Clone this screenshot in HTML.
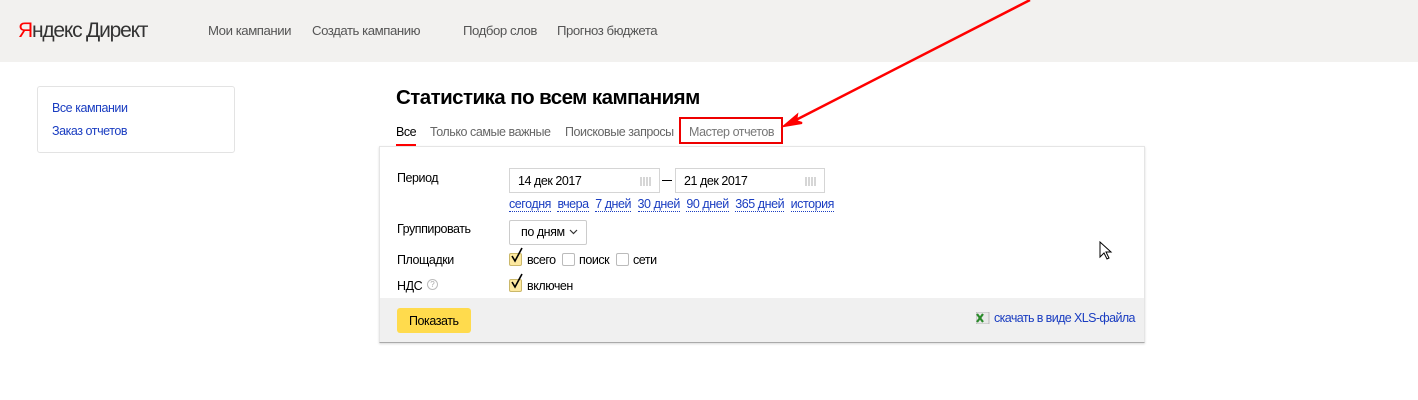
<!DOCTYPE html>
<html><head><meta charset="utf-8"><style>
*{margin:0;padding:0;box-sizing:border-box}
body{width:1418px;height:400px;position:relative;background:#fff;font-family:"Liberation Sans",sans-serif;font-size:13px;color:#000;overflow:hidden}
.a{position:absolute;white-space:nowrap}
.n{font-size:12.5px;letter-spacing:-0.45px}
.lnk{color:#1a3dc1;border-bottom:1px dotted #1a3dc1;line-height:14px;margin-right:6.5px}
.inp{position:absolute;border:1px solid #d5d5d5;height:25px;background:#fff;padding:5px 8px;font-size:12.5px;letter-spacing:-0.45px}
.cal{position:absolute;right:8px;top:8px;width:11px;height:9px;background:repeating-linear-gradient(90deg,#ccc 0 2px,transparent 2px 3px),repeating-linear-gradient(0deg,#fff 0 1px,transparent 1px 3px);opacity:.8}
.cb{position:absolute;width:13px;height:13px;border:1px solid #bbb;border-radius:2px;background:#fff}
.cb.on{background:#fde9a0;border-color:#cbb86a}
</style></head><body>
<div class="a" style="left:0;top:0;width:1418px;height:62px;background:#f2f1ef"></div>
<div class="a" style="left:18px;top:19px;font-size:21px;letter-spacing:-1.2px;color:#333"><span style="color:#f00">Я</span>ндекс Директ</div>
<div class="a n" style="left:208px;top:23px;color:#555;font-size:13.2px">Мои кампании</div>
<div class="a n" style="left:312px;top:23px;color:#555;font-size:13.2px">Создать кампанию</div>
<div class="a n" style="left:463px;top:23px;color:#555;font-size:13.2px">Подбор слов</div>
<div class="a n" style="left:557px;top:23px;color:#555;font-size:13.2px">Прогноз бюджета</div>

<div class="a" style="left:37px;top:86px;width:198px;height:67px;border:1px solid #e3e3e3;border-radius:3px"></div>
<div class="a n" style="left:52px;top:101px;color:#1a3dc1">Все кампании</div>
<div class="a n" style="left:52px;top:124px;color:#1a3dc1">Заказ отчетов</div>

<div class="a" style="left:396px;top:86px;font-size:20.5px;font-weight:bold;letter-spacing:-0.55px">Статистика по всем кампаниям</div>
<div class="a n" style="left:396px;top:125px">Все</div>
<div class="a" style="left:396px;top:144px;width:20px;height:2px;background:#f00"></div>
<div class="a n" style="left:430px;top:125px;color:#666">Только самые важные</div>
<div class="a n" style="left:565px;top:125px;color:#666">Поисковые запросы</div>
<div class="a n" style="left:689px;top:125px;color:#777">Мастер отчетов</div>
<div class="a" style="left:679px;top:117px;width:104px;height:27px;border:2px solid #e00"></div>

<div class="a" style="left:379px;top:146px;width:766px;height:197px;border:1px solid #e5e5e5;border-bottom:1px solid #aaa;box-shadow:0 1px 2px rgba(0,0,0,.15)"></div>
<div class="a" style="left:380px;top:298px;width:764px;height:44px;background:#f0f0f0"></div>

<div class="a n" style="left:397px;top:171px">Период</div>
<div class="inp" style="left:509px;top:168px;width:151px">14 дек 2017<div class="cal"></div></div>
<div class="a" style="left:662px;top:180px;width:10px;height:1px;background:#000"></div>
<div class="inp" style="left:675px;top:168px;width:150px">21 дек 2017<div class="cal"></div></div>
<div class="a n" style="left:509px;top:197px"><span class="lnk">сегодня</span><span class="lnk">вчера</span><span class="lnk">7 дней</span><span class="lnk">30 дней</span><span class="lnk">90 дней</span><span class="lnk">365 дней</span><span class="lnk">история</span></div>

<div class="a n" style="left:397px;top:222px">Группировать</div>
<div class="a" style="left:509px;top:220px;width:78px;height:25px;border:1px solid #ccc;border-radius:2px"></div>
<div class="a n" style="left:521px;top:225px">по дням</div>
<svg class="a" style="left:569px;top:229px" width="9" height="6"><path d="M1 1l3.5 3.5L8 1" stroke="#333" fill="none" stroke-width="1.2"/></svg>

<div class="a n" style="left:397px;top:253px">Площадки</div>
<div class="cb on" style="left:509px;top:253px"></div>
<svg class="a" style="left:510px;top:247px" width="14" height="17"><path d="M2 9l3 5L12 1" stroke="#000" fill="none" stroke-width="1.6"/></svg>
<div class="a n" style="left:527px;top:253px">всего</div>
<div class="cb" style="left:562px;top:253px"></div>
<div class="a n" style="left:579px;top:253px">поиск</div>
<div class="cb" style="left:616px;top:253px"></div>
<div class="a n" style="left:633px;top:253px">сети</div>

<div class="a n" style="left:397px;top:279px">НДС</div>
<div class="a" style="left:427px;top:279px;width:11px;height:11px;border:1px solid #bbb;border-radius:50%;font-size:8px;color:#aaa;text-align:center;line-height:9px">?</div>
<div class="cb on" style="left:509px;top:279px"></div>
<svg class="a" style="left:510px;top:273px" width="14" height="17"><path d="M2 9l3 5L12 1" stroke="#000" fill="none" stroke-width="1.6"/></svg>
<div class="a n" style="left:527px;top:279px">включен</div>

<div class="a" style="left:397px;top:308px;width:74px;height:25px;background:#ffdb4d;border-radius:3px"></div>
<div class="a n" style="left:409px;top:314px">Показать</div>
<svg class="a" style="left:976px;top:312px" width="14" height="12"><rect x="0" y="0" width="13" height="12" fill="#e8e8e8" stroke="#999" stroke-width=".6"/><path d="M1 2l6 8M7 2l-6 8" stroke="#2a8a2a" stroke-width="2.2"/></svg>
<div class="a n" style="left:994px;top:311px;color:#1a3dc1;letter-spacing:-0.6px">скачать в виде XLS-файла</div>

<svg class="a" style="left:1099px;top:241px" width="14" height="20"><path d="M1 1v15l4-4 3 6 2-1-3-6h5z" fill="#fff" stroke="#000" stroke-width="1"/></svg>

<svg class="a" style="left:0;top:0" width="1418" height="400"><line x1="1030" y1="0" x2="790" y2="123" stroke="#f00" stroke-width="2.5"/><path d="M784 126l13-11-1 6 6 2z" fill="#f00" stroke="#f00" stroke-width="2"/></svg>
</body></html>
